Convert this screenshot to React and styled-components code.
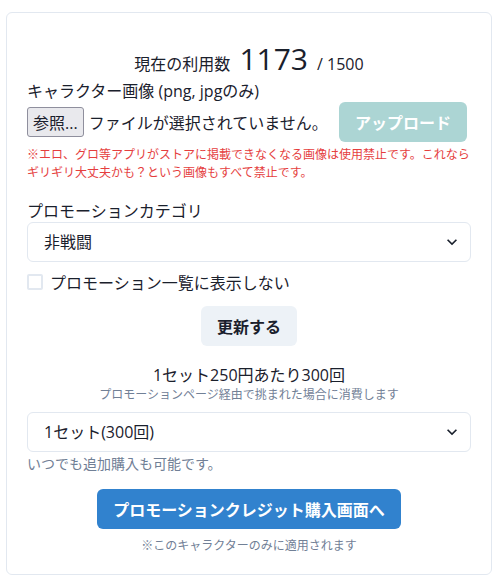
import React, { useState } from 'react';
import styled, { createGlobalStyle } from 'styled-components';

const GlobalStyle = createGlobalStyle`
  body {
    margin: 0;
    background: #fff;
    color: #1a202c;
    font-family: "Open Sans", "Noto Sans CJK JP", sans-serif;
  }
  * { box-sizing: border-box; }
`;

const Page = styled.div`
  padding: 12px 0 0 6px;
`;

const Card = styled.div`
  width: 486px;
  border: 1px solid #e2e8f0;
  border-radius: 6px;
  padding: 20px;
  display: flex;
  flex-direction: column;
`;

const UsageRow = styled.div`
  display: flex;
  justify-content: center;
  align-items: baseline;
  gap: 9px;
  margin-top: 4px;
  height: 43px;
  font-size: 16px;
`;

const BigNumber = styled.span`
  font-size: 30px;
  line-height: 43px;
`;

const Label = styled.div`
  font-size: 16px;
  line-height: ${({ $lh }) => $lh || '20px'};
  margin-top: ${({ $mt }) => $mt || 0}px;
`;

const FileRow = styled.div`
  display: flex;
  align-items: center;
  justify-content: space-between;
  height: 40px;
  margin-top: 1px;
`;

const FileInput = styled.label`
  display: flex;
  align-items: center;
  gap: 5px;
  font-size: 16px;
`;

const BrowseButton = styled.span`
  display: inline-flex;
  align-items: center;
  height: 30px;
  padding: 0 5px;
  background: #e9e9ed;
  border: 1px solid #8f8f9d;
  border-radius: 3px;
  font-size: 16px;
`;

const Button = styled.button`
  height: 40px;
  padding: 0 16px;
  border: none;
  border-radius: 6px;
  font-family: inherit;
  font-size: 16px;
  font-weight: 700;
  background: ${({ $bg }) => $bg};
  color: ${({ $fg }) => $fg};
  opacity: ${({ disabled }) => (disabled ? 0.4 : 1)};
  align-self: ${({ $center }) => ($center ? 'center' : 'auto')};
  margin-top: ${({ $mt }) => $mt || 0}px;
  margin-right: ${({ $mr }) => $mr || 0}px;
  cursor: pointer;
`;

const Warning = styled.p`
  margin: 4px 0 0;
  font-size: 12px;
  line-height: 18px;
  color: #e53e3e;
`;

const SelectWrap = styled.div`
  position: relative;
  margin-top: ${({ $mt }) => $mt || 0}px;
`;

const Select = styled.select`
  width: 100%;
  height: 40px;
  appearance: none;
  border: 1px solid #e2e8f0;
  border-radius: 6px;
  background: #fff;
  padding: 0 40px 0 16px;
  font-family: inherit;
  font-size: 16px;
  color: #1a202c;
`;

const Chevron = styled.svg`
  position: absolute;
  right: 9px;
  top: 10px;
  width: 20px;
  height: 20px;
  pointer-events: none;
`;

const CheckRow = styled.label`
  display: flex;
  align-items: center;
  gap: 7px;
  height: 24px;
  margin-top: 8px;
  font-size: 16px;
`;

const Box = styled.span`
  width: 16px;
  height: 16px;
  border: 2px solid #e2e8f0;
  border-radius: 2px;
  background: ${({ $on }) => ($on ? '#3182ce' : '#fff')};
`;

const CenterText = styled.div`
  text-align: center;
  font-size: ${({ $size }) => $size}px;
  line-height: ${({ $lh }) => $lh}px;
  color: ${({ $muted }) => ($muted ? '#718096' : '#1a202c')};
  margin-top: ${({ $mt }) => $mt || 0}px;
`;

const Hint = styled.div`
  font-size: 14px;
  line-height: 20px;
  color: #718096;
  margin-top: 2px;
`;

function Dropdown({ value, options, mt }) {
  return (
    <SelectWrap $mt={mt}>
      <Select defaultValue={value}>
        {options.map((o) => (
          <option key={o}>{o}</option>
        ))}
      </Select>
      <Chevron viewBox="0 0 24 24">
        <path fill="#1a202c" d="M16.59 8.59L12 13.17 7.41 8.59 6 10l6 6 6-6z" />
      </Chevron>
    </SelectWrap>
  );
}

export default function App() {
  const [hidden, setHidden] = useState(false);

  return (
    <Page>
      <GlobalStyle />
      <Card>
        <UsageRow>
          <span>現在の利用数</span>
          <BigNumber>1173</BigNumber>
          <span>/ 1500</span>
        </UsageRow>

        <Label $lh="19px" $mt={2}>キャラクター画像 (png, jpgのみ)</Label>
        <FileRow>
          <FileInput>
            <BrowseButton>参照...</BrowseButton>
            ファイルが選択されていません。
          </FileInput>
          <Button disabled $bg="#319795" $fg="#fff" $mr={4}>
            アップロード
          </Button>
        </FileRow>
        <Warning>
          ※エロ、グロ等アプリがストアに掲載できなくなる画像は使用禁止です。これならギリギリ大丈夫かも？という画像もすべて禁止です。
        </Warning>

        <Label $mt={19}>プロモーションカテゴリ</Label>
        <Dropdown value="非戦闘" options={['非戦闘', '戦闘']} mt={1} />

        <CheckRow onClick={() => setHidden(!hidden)}>
          <Box $on={hidden} />
          プロモーション一覧に表示しない
        </CheckRow>

        <Button $center $bg="#edf2f7" $fg="#1a202c" $mt={12}>
          更新する
        </Button>

        <CenterText $size={16} $lh={24} $mt={17}>
          1セット250円あたり300回
        </CenterText>
        <CenterText $size={12} $lh={16} $muted>
          プロモーションページ経由で挑まれた場合に消費します
        </CenterText>
        <Dropdown value="1セット(300回)" options={['1セット(300回)', '2セット(600回)']} mt={9} />
        <Hint>いつでも追加購入も可能です。</Hint>

        <Button $center $bg="#3182ce" $fg="#fff" $mt={15}>
          プロモーションクレジット購入画面へ
        </Button>
        <CenterText $size={12} $lh={16} $muted $mt={9}>
          ※このキャラクターのみに適用されます
        </CenterText>
      </Card>
    </Page>
  );
}
